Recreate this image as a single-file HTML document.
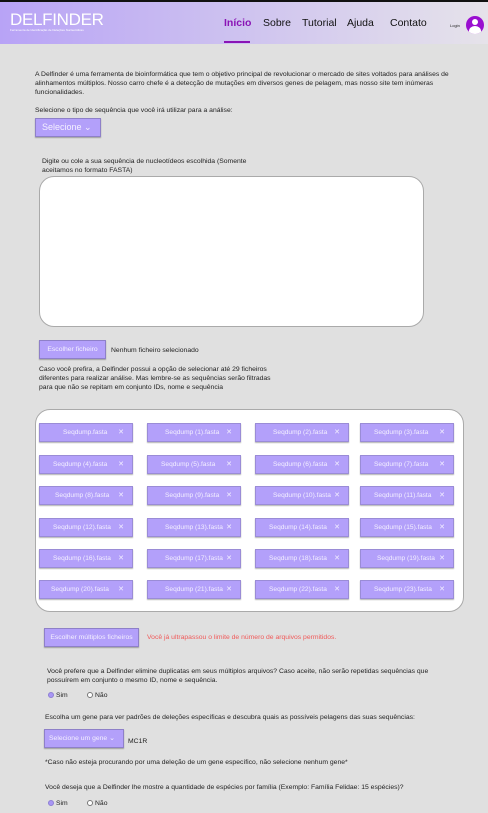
<!DOCTYPE html>
<html><head><meta charset="utf-8"><style>
*{margin:0;padding:0;box-sizing:border-box}
body{width:488px;height:813px;background:#e0e0e0;font-family:"Liberation Sans",sans-serif;color:#222;position:relative;overflow:hidden}
.a{position:absolute}
.hdr{left:0;top:0;width:488px;height:44px;border-top:2px solid #111;background:linear-gradient(90deg,#b8a3f6 0%,#ccc0f0 45%,#e6e3ea 100%)}
.logo{left:10px;top:10px;color:#fff;font-size:17px;letter-spacing:-0.3px}
.sub{left:10px;top:28px;color:#fff;font-size:3px}
.nav{top:17px;font-size:10.5px;color:#111}
.t{font-size:6.8px;line-height:9px;color:#222}
.btn{background:#b3a0fa;color:#f4f0ff;border:1px solid #8e80c8;box-shadow:0 1px 1px rgba(0,0,0,.3);font-size:6.8px}
.box{background:#fff;border:1px solid #aaa}
.chip{position:absolute;width:94px;height:19px;background:#b3a0fa;border:1px solid #9a8cd6;box-shadow:0 1px 1px rgba(0,0,0,.3);color:#f3efff;font-size:6.6px;line-height:17px}
.chip span{position:absolute;right:8px;font-size:7px}
.rad{display:inline-block;width:6px;height:6px;border-radius:50%;border:1px solid #777;background:#fff;vertical-align:middle;margin-right:2px}
.rad.on{background:#a996f5;border-color:#8d7fd4}
</style></head><body>
<div class="a hdr"></div>
<div class="a logo">DELFINDER</div>
<div class="a sub">Ferramenta de Identificação de Deleções Nucleotídicas</div>
<div class="a nav" style="left:224px;color:#8a14b5;font-weight:bold">Início</div>
<div class="a" style="left:224px;top:41px;width:26px;height:2px;background:#8a14b5"></div>
<div class="a nav" style="left:263px">Sobre</div>
<div class="a nav" style="left:302px">Tutorial</div>
<div class="a nav" style="left:347px">Ajuda</div>
<div class="a nav" style="left:390px">Contato</div>
<div class="a" style="left:450px;top:23px;font-size:4px">Login</div>
<div class="a" style="left:466px;top:16px;width:18px;height:18px;border-radius:50%;background:#9a0fd0;overflow:hidden"><div class="a" style="left:6px;top:3px;width:6px;height:6px;border-radius:50%;background:#fff"></div><div class="a" style="left:3px;top:10px;width:12px;height:10px;border-radius:50% 50% 0 0;background:#fff"></div></div>

<div class="a t" style="left:35px;top:70px;width:430px">A Delfinder é uma ferramenta de bioinformática que tem o objetivo principal de revolucionar o mercado de sites voltados para análises de alinhamentos múltiplos. Nosso carro chefe é a detecção de mutações em diversos genes de pelagem, mas nosso site tem inúmeras funcionalidades.</div>
<div class="a t" style="left:35px;top:106px">Selecione o tipo de sequência que você irá utilizar para a análise:</div>
<div class="a btn" style="left:35px;top:118px;width:66px;height:19px;font-size:9px;line-height:17px;padding-left:6px">Selecione ⌄</div>

<div class="a t" style="left:42px;top:157px;width:230px">Digite ou cole a sua sequência de nucleotídeos escolhida (Somente aceitamos no formato FASTA)</div>
<div class="a box" style="left:39px;top:176px;width:385px;height:151px;border-radius:15px"></div>

<div class="a btn" style="left:39px;top:340px;width:67px;height:19px;line-height:17px;text-align:center">Escolher ficheiro</div>
<div class="a t" style="left:111px;top:346px">Nenhum ficheiro selecionado</div>
<div class="a t" style="left:39px;top:365px;width:245px">Caso você prefira, a Delfinder possui a opção de selecionar até 29 ficheiros diferentes para realizar análise. Mas lembre-se as sequências serão filtradas para que não se repitam em conjunto IDs, nome e sequência</div>

<div class="a box" style="left:35px;top:409px;width:429px;height:203px;border-radius:15px"></div>
<div class="chip" style="left:39px;top:423px;padding-left:23px">Seqdump.fasta<span>✕</span></div>
<div class="chip" style="left:147px;top:423px;padding-left:17px">Seqdump (1).fasta<span>✕</span></div>
<div class="chip" style="left:255px;top:423px;padding-left:17px">Seqdump (2).fasta<span>✕</span></div>
<div class="chip" style="left:360px;top:423px;padding-left:13px">Seqdump (3).fasta<span>✕</span></div>
<div class="chip" style="left:39px;top:455px;padding-left:13px">Seqdump (4).fasta<span>✕</span></div>
<div class="chip" style="left:147px;top:455px;padding-left:13px">Seqdump (5).fasta<span>✕</span></div>
<div class="chip" style="left:255px;top:455px;padding-left:17px">Seqdump (6).fasta<span>✕</span></div>
<div class="chip" style="left:360px;top:455px;padding-left:13px">Seqdump (7).fasta<span>✕</span></div>
<div class="chip" style="left:39px;top:486px;padding-left:15px">Seqdump (8).fasta<span>✕</span></div>
<div class="chip" style="left:147px;top:486px;padding-left:17px">Seqdump (9).fasta<span>✕</span></div>
<div class="chip" style="left:255px;top:486px;padding-left:17px">Seqdump (10).fasta<span>✕</span></div>
<div class="chip" style="left:360px;top:486px;padding-left:13px">Seqdump (11).fasta<span>✕</span></div>
<div class="chip" style="left:39px;top:518px;padding-left:13px">Seqdump (12).fasta<span>✕</span></div>
<div class="chip" style="left:147px;top:518px;padding-left:17px">Seqdump (13).fasta<span>✕</span></div>
<div class="chip" style="left:255px;top:518px;padding-left:13px">Seqdump (14).fasta<span>✕</span></div>
<div class="chip" style="left:360px;top:518px;padding-left:13px">Seqdump (15).fasta<span>✕</span></div>
<div class="chip" style="left:39px;top:549px;padding-left:13px">Seqdump (16).fasta<span>✕</span></div>
<div class="chip" style="left:147px;top:549px;padding-left:17px">Seqdump (17).fasta<span>✕</span></div>
<div class="chip" style="left:255px;top:549px;padding-left:13px">Seqdump (18).fasta<span>✕</span></div>
<div class="chip" style="left:360px;top:549px;padding-left:16px">Seqdump (19).fasta<span>✕</span></div>
<div class="chip" style="left:39px;top:580px;padding-left:11px">Seqdump (20).fasta<span>✕</span></div>
<div class="chip" style="left:147px;top:580px;padding-left:17px">Seqdump (21).fasta<span>✕</span></div>
<div class="chip" style="left:255px;top:580px;padding-left:13px">Seqdump (22).fasta<span>✕</span></div>
<div class="chip" style="left:360px;top:580px;padding-left:13px">Seqdump (23).fasta<span>✕</span></div>

<div class="a btn" style="left:44px;top:628px;width:95px;height:19px;line-height:17px;text-align:center">Escolher múltiplos ficheiros</div>
<div class="a t" style="left:147px;top:633px;color:#f05a5a">Você já ultrapassou o limite de número de arquivos permitidos.</div>
<div class="a t" style="left:47px;top:667px;width:405px">Você prefere que a Delfinder elimine duplicatas em seus múltiplos arquivos? Caso aceite, não serão repetidas sequências que possuírem em conjunto o mesmo ID, nome e sequência.</div>
<div class="a t" style="left:48px;top:691px"><span class="rad on"></span>Sim</div>
<div class="a t" style="left:87px;top:691px"><span class="rad"></span>Não</div>
<div class="a t" style="left:45px;top:713px">Escolha um gene para ver padrões de deleções específicas e descubra quais as possíveis pelagens das suas sequências:</div>
<div class="a btn" style="left:44px;top:729px;width:80px;height:19px;line-height:17px;padding-left:4px">Selecione um gene ⌄</div>
<div class="a t" style="left:128px;top:737px">MC1R</div>
<div class="a t" style="left:45px;top:758px">*Caso não esteja procurando por uma deleção de um gene específico, não selecione nenhum gene*</div>
<div class="a t" style="left:45px;top:783px">Você deseja que a Delfinder lhe mostre a quantidade de espécies por família (Exemplo: Família Felidae: 15 espécies)?</div>
<div class="a t" style="left:48px;top:799px"><span class="rad on"></span>Sim</div>
<div class="a t" style="left:87px;top:799px"><span class="rad"></span>Não</div>
</body></html>
